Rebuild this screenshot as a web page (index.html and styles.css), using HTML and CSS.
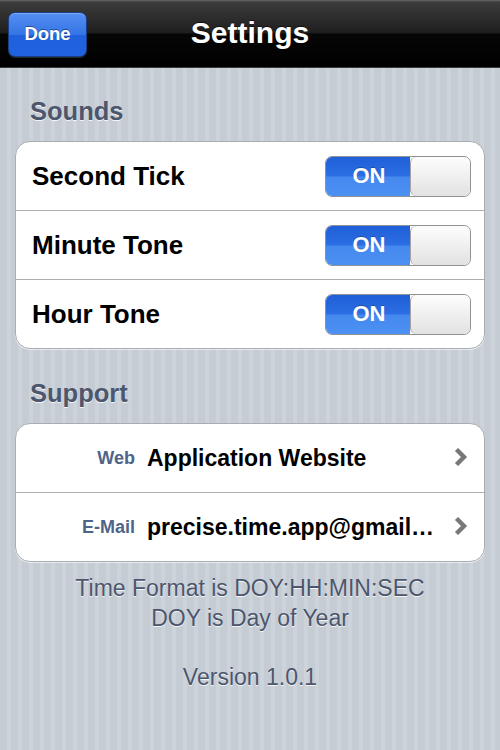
FILE: index.html
```html
<!DOCTYPE html>
<html lang="en">
<head>
    <meta charset="UTF-8">
    <meta name="viewport" content="width=device-width, initial-scale=1.0">
    <title>Settings</title>
    <link rel="stylesheet" href="styles.css">
</head>
<body>
    <div class="screen">
        <div class="nav-bar">
            <div class="nav-left">
                <button class="btn-done">Done</button>
            </div>
            <div class="nav-title">Settings</div>
            <div class="nav-right"></div>
        </div>

        <div class="section-title first">Sounds</div>
        <div class="group">
            <div class="row">
                <span class="row-label">Second Tick</span>
                <div class="switch">
                    <div class="switch-on">ON</div>
                    <div class="switch-knob"></div>
                </div>
            </div>
            <div class="row">
                <span class="row-label">Minute Tone</span>
                <div class="switch">
                    <div class="switch-on">ON</div>
                    <div class="switch-knob"></div>
                </div>
            </div>
            <div class="row">
                <span class="row-label">Hour Tone</span>
                <div class="switch">
                    <div class="switch-on">ON</div>
                    <div class="switch-knob"></div>
                </div>
            </div>
        </div>

        <div class="section-title">Support</div>
        <div class="group">
            <div class="row link-row">
                <span class="key">Web</span>
                <span class="value">Application Website</span>
                <svg class="chevron" width="14" height="18" viewBox="0 0 14 18">
                    <polyline points="2.5,1.5 10,9 2.5,16.5" fill="none" stroke="#787878" stroke-width="4.4" stroke-linejoin="miter" stroke-miterlimit="2"/>
                </svg>
            </div>
            <div class="row link-row">
                <span class="key">E-Mail</span>
                <span class="value">precise.time.app@gmail.com</span>
                <svg class="chevron" width="14" height="18" viewBox="0 0 14 18">
                    <polyline points="2.5,1.5 10,9 2.5,16.5" fill="none" stroke="#787878" stroke-width="4.4" stroke-linejoin="miter" stroke-miterlimit="2"/>
                </svg>
            </div>
        </div>

        <div class="footer">
            <p>Time Format is DOY:HH:MIN:SEC</p>
            <p>DOY is Day of Year</p>
            <p class="version">Version 1.0.1</p>
        </div>
    </div>
</body>
</html>
```

FILE: styles.css
```css
body, html {
    margin: 0;
    padding: 0;
    width: 100%;
    height: 100%;
    overflow: hidden;
    font-family: 'Liberation Sans', Arial, sans-serif;
}
.screen {
    width: 500px;
    height: 750px;
    background: repeating-linear-gradient(90deg, #c5ccd4 0px, #c5ccd4 7px, #cdd3da 7px, #cdd3da 11px);
}

/* top bar */
.nav-bar {
    height: 67px;
    display: grid;
    grid-template-columns: 1fr auto 1fr;
    align-items: center;
    border-bottom: 1px solid #3a3a3a;
    background: linear-gradient(#6a6a6a 0px, #3c3c3c 2px, #1e1e1e 33px, #060606 34px, #000 67px);
}
.nav-left {
    padding-left: 8px;
}
.btn-done {
    width: 79px;
    height: 45px;
    margin-top: 1px;
    border: 1px solid #1b3f86;
    border-radius: 7px;
    background: linear-gradient(#558ff0 0%, #3474e6 50%, #1f61dd 52%, #2062e0 100%);
    box-shadow: inset 0 1px 0 rgba(255, 255, 255, 0.25), 0 1px 0 rgba(255, 255, 255, 0.15);
    color: white;
    font-family: 'Liberation Sans', Arial, sans-serif;
    font-weight: bold;
    font-size: 18.5px;
    text-shadow: 0 -1px 0 rgba(0, 0, 0, 0.4);
    padding: 0;
}
.nav-title {
    color: white;
    font-weight: bold;
    font-size: 30px;
    text-shadow: 0 -1px 0 rgba(0, 0, 0, 0.6);
    margin-top: -1px;
}

/* groups */
.section-title {
    margin: 29px 0 15px 0;
    padding-left: 30px;
    font-size: 25.5px;
    line-height: 30px;
    font-weight: bold;
    color: #4c566c;
    text-shadow: 0 1px 0 rgba(255, 255, 255, 0.8);
}
.section-title.first {
    margin-top: 28px;
}
.group {
    margin: 0 15px;
    background: white;
    border: 1px solid #a9adb2;
    border-radius: 15px;
    box-shadow: 0 1px 0 rgba(255, 255, 255, 0.6);
}
.row {
    height: 68px;
    display: flex;
    align-items: center;
    padding: 0 13px 0 16px;
    border-top: 1px solid #adadad;
}
.row:first-child {
    border-top: none;
}
.row-label {
    flex: 1;
    font-size: 26px;
    font-weight: bold;
    color: black;
}

/* switch */
.switch {
    width: 146px;
    height: 41px;
    box-sizing: border-box;
    display: flex;
    border: 1px solid #8f9296;
    border-radius: 7px;
    overflow: hidden;
}
.switch-on {
    width: 82px;
    display: flex;
    align-items: center;
    justify-content: center;
    color: white;
    font-weight: bold;
    font-size: 22px;
    text-shadow: 0 -1px 0 rgba(0, 0, 0, 0.25);
    background: linear-gradient(#1f5fd8 0%, #2c6ee3 48%, #4589ef 52%, #4d90f3 100%);
    padding-left: 2px;
}
.switch-knob {
    flex: 1;
    border-left: 1px solid #a3a3a3;
    border-radius: 6px;
    background: linear-gradient(#fdfdfd, #e2e2e2);
}

/* support rows */
.link-row {
    padding: 0 16px 0 0;
}
.key {
    width: 119px;
    text-align: right;
    font-size: 18px;
    font-weight: bold;
    color: #4f6489;
    margin-right: 12px;
    padding-top: 1px;
}
.value {
    flex: 1;
    min-width: 0;
    white-space: nowrap;
    overflow: hidden;
    text-overflow: ellipsis;
    font-size: 23px;
    font-weight: bold;
    color: black;
    margin-right: 16px;
}
.chevron {
    flex: none;
    margin-top: -2px;
}

/* footer */
.footer {
    margin-top: 11px;
    text-align: center;
    color: #4c566c;
    font-size: 23px;
    line-height: 30px;
    text-shadow: 0 1px 0 rgba(255, 255, 255, 0.8);
}
.footer p {
    margin: 0;
}
.footer .version {
    margin-top: 29px;
}
```
